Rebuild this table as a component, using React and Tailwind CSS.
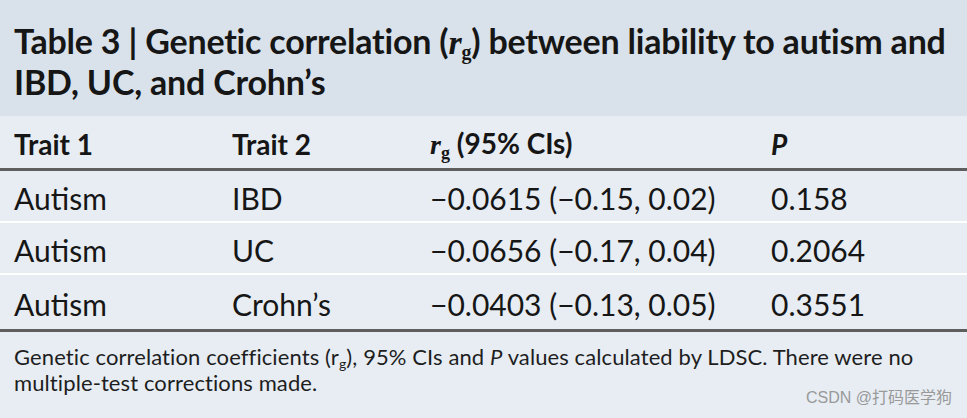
const rows = [
  { t1: 'Autism', t2: 'IBD', rg: '\u22120.0615 (\u22120.15, 0.02)', p: '0.158', h: 'h-[50px]' },
  { t1: 'Autism', t2: 'UC', rg: '\u22120.0656 (\u22120.17, 0.04)', p: '0.2064', h: 'h-[50px]' },
  { t1: 'Autism', t2: 'Crohn\u2019s', rg: '\u22120.0403 (\u22120.13, 0.05)', p: '0.3551', h: 'h-[54px]' },
];

const Cols = ({ a, b, c, d, className }) => (
  <div className={`grid grid-cols-[218px_198px_341px_1fr] pl-[14px] ${className}`}>
    <div>{a}</div>
    <div>{b}</div>
    <div>{c}</div>
    <div>{d}</div>
  </div>
);

export default function App() {
  return (
    <div className="w-[967px] h-[418px] bg-[#e7edf3] text-[#161616] font-['Lato','Open_Sans',sans-serif] flex flex-col overflow-hidden relative">
      {/* Title */}
      <div className="h-[116px] shrink-0 bg-[#d9e2ea] px-[14px] pt-[21px]">
        <h1 className="text-[34px] leading-[39px] font-bold tracking-[-0.2px]">
          Table 3 | Genetic correlation (<i className="font-['Liberation_Serif',serif]">r</i>
          <sub className="text-[20px] font-['Liberation_Serif',serif]">g</sub>) between liability to autism and
          <br />
          IBD, UC, and Crohn’s
        </h1>
      </div>

      {/* Header row */}
      <Cols
        className="h-[52px] shrink-0 items-center text-[28px] font-bold pt-[4px]"
        a="Trait 1"
        b="Trait 2"
        c={
          <span>
            <i className="font-['Liberation_Serif',serif]">r</i>
            <sub className="text-[18px] font-['Liberation_Serif',serif]">g</sub> (95% CIs)
          </span>
        }
        d={<i>P</i>}
      />
      <div className="h-[3px] shrink-0 bg-[#5e5e5e]" />

      {rows.map((r, i) => (
        <div key={i} className="shrink-0">
          <Cols
            className={`${r.h} items-center text-[30px] pt-[5px]`}
            a={r.t1}
            b={r.t2}
            c={r.rg}
            d={r.p}
          />
          {i < rows.length - 1 && <div className="h-[2px] bg-white" />}
        </div>
      ))}
      <div className="h-[3px] shrink-0 bg-[#5e5e5e]" />

      {/* Footnote */}
      <p className="px-[14px] pt-[12px] text-[22px] leading-[26px] tracking-[0.1px] text-[#1e1e1e]">
        Genetic correlation coefficients (r<sub className="text-[14px]">g</sub>), 95% CIs and <i>P</i> values calculated by LDSC. There were no
        <br />
        multiple-test corrections made.
      </p>

      <div className="absolute right-[15px] bottom-[8px] text-[16px] text-[#999] font-['Liberation_Sans','Noto_Sans_CJK_SC',sans-serif]">
        CSDN @打码医学狗
      </div>
    </div>
  );
}
